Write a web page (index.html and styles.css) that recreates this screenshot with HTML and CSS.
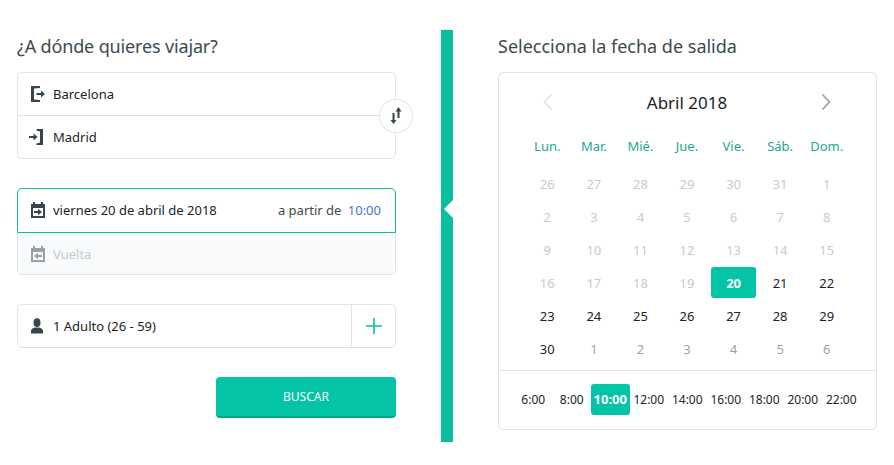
FILE: index.html
```html
<!DOCTYPE html>
<html lang="es">
<head>
  <meta charset="UTF-8">
  <title>Buscar viaje</title>
  <link rel="stylesheet" href="styles.css">
</head>
<body>

<div class="page">
  <div class="search">
    <h2 class="tight">¿A dónde quieres viajar?</h2>

    <div class="box route">
      <div class="row">
        <svg class="icon" viewBox="0 0 18 18"><path d="M2 1h9v2L5 3.500v11l6 .5v2H2z M7.500 8H12V5.500L16 9l-4 3.500V10H7.500z" fill="#36464b"/></svg>
        <span>Barcelona</span>
      </div>
      <div class="row">
        <svg class="icon" viewBox="0 0 18 18"><path d="M14 1H7.500v1.500L11 3.500v11l-3.500 1V17H14z M0 8h4.500V5.500L8.500 9l-4 3.500V10H0z" fill="#36464b"/></svg>
        <span>Madrid</span>
      </div>
      <div class="swap">
        <svg viewBox="0 0 18 18" width="18" height="18"><path d="M11.500 0l3 4.500h-2V11h-2V4.500h-2z M5.500 6h2v7h2l-3 4-3-4h2z" fill="#36464b"/></svg>
      </div>
    </div>

    <div class="box dates">
      <div class="row active">
        <svg class="icon" viewBox="0 0 18 18"><path d="M4 1h2v2h6V1h2v2h2v14H2V3h2z M4 7v8h10V7z M5 10h4V7.800L13 11l-4 3.200V12H5z" fill="#36464b" fill-rule="evenodd"/></svg>
        <span>viernes 20 de abril de 2018</span>
        <span class="from">a partir de <em>10:00</em></span>
      </div>
      <div class="row empty">
        <svg class="icon" viewBox="0 0 18 18"><path d="M4 1h2v2h6V1h2v2h2v14H2V3h2z M4 7v8h10V7z M13 10H9V7.800L5 11l4 3.200V12h4z" fill="#9aa0a3" fill-rule="evenodd"/></svg>
        <span>Vuelta</span>
      </div>
    </div>

    <div class="box people">
      <div class="row">
        <svg class="icon" viewBox="0 0 18 18"><ellipse cx="8" cy="5.700" rx="3.500" ry="4.400" fill="#36464b"/><path d="M2 16.500v-2.500c0-2 2.500-3 3.800-3.400h4.400c1.300.4 3.800 1.400 3.800 3.400v2.500z" fill="#36464b"/></svg>
        <span>1 Adulto (26 - 59)</span>
      </div>
      <div class="plus">
        <svg viewBox="0 0 16 16" width="16" height="16"><path d="M7.200 0h1.600v7.200H16v1.600H8.800V16H7.200V8.800H0V7.200h7.200z" fill="#03c4a6"/></svg>
      </div>
    </div>

    <div class="actions">
      <button class="btn">BUSCAR</button>
    </div>
  </div>

  <div class="divider"><i class="notch"></i></div>

  <div class="picker">
    <h2>Selecciona la fecha de salida</h2>

    <div class="box calendar">
      <div class="month">
        <svg viewBox="0 0 10 18" width="10" height="18"><path d="M8.500 1.500 1.500 9l7 7.500" fill="none" stroke="#e0e3e4" stroke-width="1.700"/></svg>
        <span>Abril 2018</span>
        <svg viewBox="0 0 10 18" width="10" height="18"><path d="M1.500 1.500 8.500 9l-7 7.500" fill="none" stroke="#9a9fa2" stroke-width="1.700"/></svg>
      </div>

      <div class="grid weekdays">
        <span>Lun.</span><span>Mar.</span><span>Mié.</span><span>Jue.</span><span>Vie.</span><span>Sáb.</span><span>Dom.</span>
      </div>

      <div class="grid days">
        <span class="off">26</span><span class="off">27</span><span class="off">28</span><span class="off">29</span><span class="off">30</span><span class="off">31</span><span class="off">1</span>
        <span class="off">2</span><span class="off">3</span><span class="off">4</span><span class="off">5</span><span class="off">6</span><span class="off">7</span><span class="off">8</span>
        <span class="off">9</span><span class="off">10</span><span class="off">11</span><span class="off">12</span><span class="off">13</span><span class="off">14</span><span class="off">15</span>
        <span class="off">16</span><span class="off">17</span><span class="off">18</span><span class="off">19</span><span class="sel">20</span><span>21</span><span>22</span>
        <span>23</span><span>24</span><span>25</span><span>26</span><span>27</span><span>28</span><span>29</span>
        <span>30</span><span class="next">1</span><span class="next">2</span><span class="next">3</span><span class="next">4</span><span class="next">5</span><span class="next">6</span>
      </div>

      <div class="times">
        <span>6:00</span><span>8:00</span><span class="sel">10:00</span><span>12:00</span><span>14:00</span><span>16:00</span><span>18:00</span><span>20:00</span><span>22:00</span>
      </div>
    </div>
  </div>
</div>

</body>
</html>
```

FILE: styles.css
```css
body {
  font-family: 'Noto Sans', sans-serif;
  margin: 0;
  background: #fff;
  color: #1c2326;
  font-size: 14px;
}
h2 {
  font-weight: 400;
  font-size: 18px;
  line-height: 24px;
  color: #3c4a50;
  margin: 4px 0 14px;
}
h2.tight {
  letter-spacing: -0.15px;
}
.page {
  display: flex;
  padding: 30px 0 0 17px;
}
.search {
  width: 379px;
}
.picker {
  width: 379px;
}
.divider {
  position: relative;
  width: 12px;
  height: 412px;
  margin: 0 45px;
  background: #0abf9f;
}
.notch {
  position: absolute;
  left: 3px;
  top: 170px;
  border-style: solid;
  border-width: 9px 9px 9px 0;
  border-color: transparent #fff transparent transparent;
}
.box {
  position: relative;
  border: 1px solid #dde5e6;
  border-radius: 5px;
  background: #fff;
}
.row {
  display: flex;
  align-items: center;
  gap: 6px;
  height: 42px;
  padding: 0 14px 0 11px;
  font-size: 13px;
}
.icon {
  width: 18px;
  height: 18px;
  flex: none;
}
.route .row:first-child {
  border-bottom: 1px solid #dde5e6;
}
.swap {
  position: absolute;
  right: -18px;
  top: 26px;
  width: 32px;
  height: 32px;
  border: 1px solid #dde5e6;
  border-radius: 50%;
  background: #fff;
  display: flex;
  align-items: center;
  justify-content: center;
}
.dates {
  margin-top: 29px;
}
.dates .active {
  height: 42px;
  margin: -1px -1px 0;
  padding-bottom: 1px;
  border: 1px solid #0abf9f;
  border-radius: 5px 5px 0 0;
  background: #fff;
}
.from {
  margin-left: auto;
  color: #3c4a50;
}
.from em {
  font-style: normal;
  color: #3b78d8;
  margin-left: 3px;
}
.dates .empty {
  background: #f9fafc;
  border-radius: 0 0 5px 5px;
  color: #c6cacc;
  height: 41px;
}
.people {
  margin-top: 29px;
  display: flex;
}
.people .row {
  flex: 1;
}
.plus {
  width: 43px;
  border-left: 1px solid #dde5e6;
  display: flex;
  align-items: center;
  justify-content: center;
}
.actions {
  display: flex;
  justify-content: flex-end;
  margin-top: 29px;
}
.btn {
  width: 180px;
  height: 41px;
  border: 0;
  border-bottom: 2px solid #03a58c;
  border-radius: 4px;
  background: #03c4a6;
  color: #fff;
  font-family: inherit;
  font-size: 12px;
}
.calendar {
  height: 356px;
}
.month {
  display: flex;
  align-items: center;
  justify-content: space-between;
  height: 30px;
  margin: 14px 45px 0 44px;
  font-size: 17px;
}
.grid {
  display: grid;
  grid-template-columns: repeat(7, 1fr);
  margin: 0 26px 0 25px;
  text-align: center;
}
.weekdays {
  margin-top: 19px;
  height: 20px;
  line-height: 20px;
  font-size: 13px;
  color: #1ba88f;
}
.days {
  margin-top: 11px;
  grid-auto-rows: 33px;
  font-size: 13px;
}
.days span {
  display: flex;
  align-items: center;
  justify-content: center;
}
.days .off {
  color: #c6cbce;
}
.days .next {
  color: #9aa5a8;
}
.days .sel {
  margin: 1px;
  border-radius: 3px;
  background: #03c4a6;
  color: #fff;
  font-weight: 700;
}
.times {
  display: grid;
  grid-template-columns: repeat(9, 38.500px);
  align-items: center;
  margin-top: 5px;
  padding: 13px 16px 0 15px;
  border-top: 1px solid #dde5e6;
  text-align: center;
  font-size: 12px;
}
.times span {
  height: 31px;
  line-height: 31px;
}
.times .sel {
  border-radius: 3px;
  background: #03c4a6;
  color: #fff;
  font-weight: 700;
  font-size: 13px;
}
```
